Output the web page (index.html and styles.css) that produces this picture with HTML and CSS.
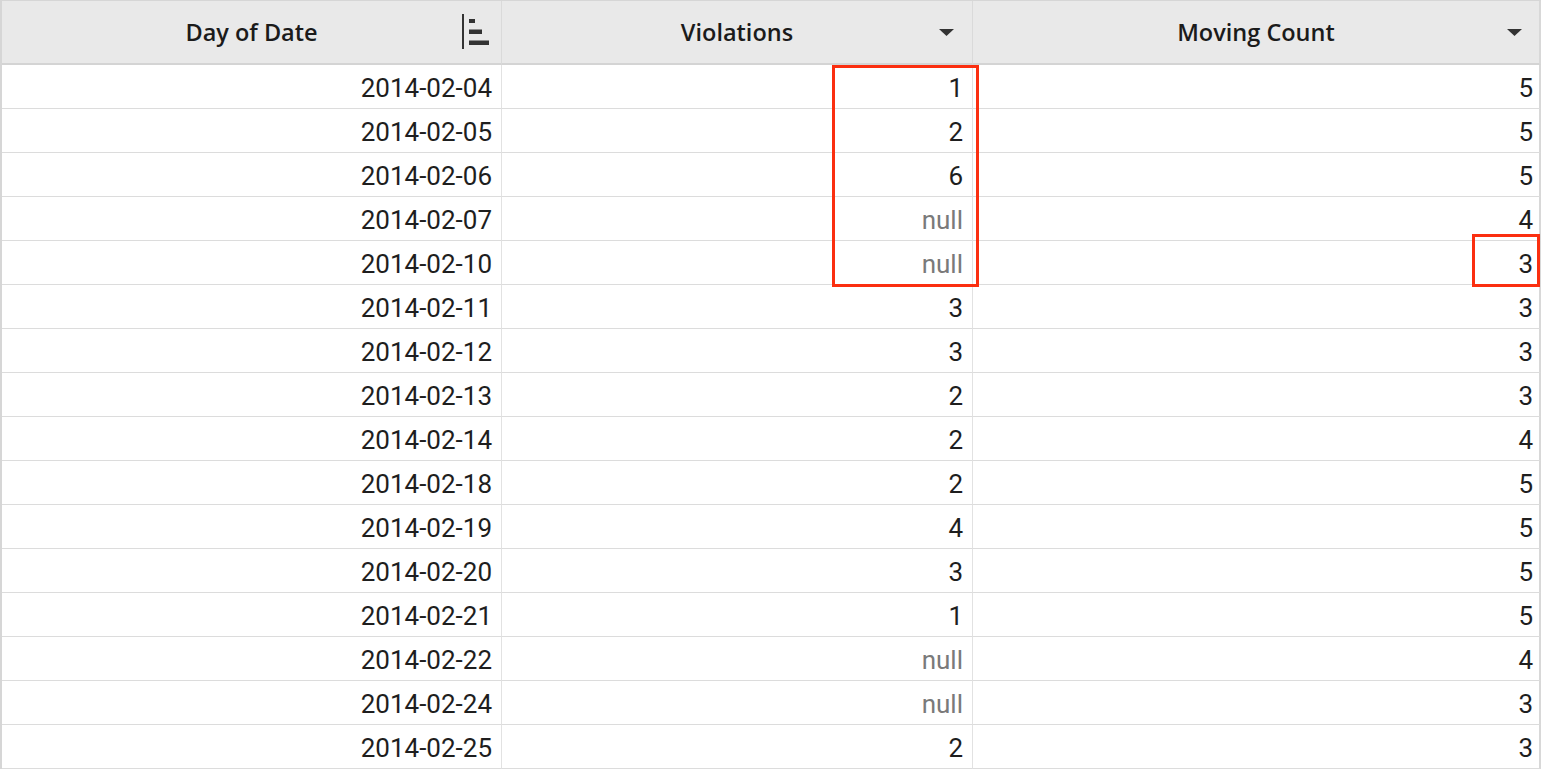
FILE: index.html
```html
<!DOCTYPE html>
<html>
<head>
<meta charset="utf-8">
<link rel="stylesheet" href="styles.css">
</head>
<body>
<div class="table-wrap">
  <div class="grid">
    <div class="hcell">
      <span class="hlabel">Day of Date</span>
      <svg class="sort-icon" width="27" height="36" viewBox="0 0 27 36"><rect x="0" y="0" width="2" height="35" fill="#333"/><rect x="7" y="5" width="6" height="4" fill="#333"/><rect x="7" y="15.5" width="13" height="4.5" fill="#333"/><rect x="7" y="26.5" width="20" height="4.5" fill="#333"/></svg>
    </div>
    <div class="hcell hcell-mid">
      <span class="hlabel">Violations</span>
      <svg class="caret" width="15" height="7" viewBox="0 0 15 7"><polygon points="0,0 15,0 7.5,7" fill="#333"/></svg>
    </div>
    <div class="hcell hcell-last">
      <span class="hlabel">Moving Count</span>
      <svg class="caret" width="15" height="7" viewBox="0 0 15 7"><polygon points="0,0 15,0 7.5,7" fill="#333"/></svg>
    </div>

    <div class="cell">2014-02-04</div><div class="cell">1</div><div class="cell last">5</div>
    <div class="cell">2014-02-05</div><div class="cell">2</div><div class="cell last">5</div>
    <div class="cell">2014-02-06</div><div class="cell">6</div><div class="cell last">5</div>
    <div class="cell">2014-02-07</div><div class="cell null">null</div><div class="cell last">4</div>
    <div class="cell">2014-02-10</div><div class="cell null">null</div><div class="cell last">3</div>
    <div class="cell">2014-02-11</div><div class="cell">3</div><div class="cell last">3</div>
    <div class="cell">2014-02-12</div><div class="cell">3</div><div class="cell last">3</div>
    <div class="cell">2014-02-13</div><div class="cell">2</div><div class="cell last">3</div>
    <div class="cell">2014-02-14</div><div class="cell">2</div><div class="cell last">4</div>
    <div class="cell">2014-02-18</div><div class="cell">2</div><div class="cell last">5</div>
    <div class="cell">2014-02-19</div><div class="cell">4</div><div class="cell last">5</div>
    <div class="cell">2014-02-20</div><div class="cell">3</div><div class="cell last">5</div>
    <div class="cell">2014-02-21</div><div class="cell">1</div><div class="cell last">5</div>
    <div class="cell">2014-02-22</div><div class="cell null">null</div><div class="cell last">4</div>
    <div class="cell">2014-02-24</div><div class="cell null">null</div><div class="cell last">3</div>
    <div class="cell">2014-02-25</div><div class="cell">2</div><div class="cell last">3</div>
  </div>
  <div class="mark mark-violations"></div>
  <div class="mark mark-count"></div>
</div>
</body>
</html>
```

FILE: styles.css
```css
html, body {
  margin: 0;
  padding: 0;
  background: #ffffff;
  overflow: hidden;
}

.table-wrap {
  position: relative;
  width: 1541px;
  border-top: 1px solid #d6d6d6;
  border-left: 2px solid #d6d6d6;
  box-sizing: border-box;
}

.grid {
  display: grid;
  grid-template-columns: 500px 471px 568px;
  grid-template-rows: 64px;
  grid-auto-rows: 44px;
}

.hcell {
  height: 64px;
  box-sizing: border-box;
  background: #e9e9e9;
  border-bottom: 2px solid #d4d4d4;
  border-right: 1px solid #dadada;
  display: grid;
  grid-template-columns: 1fr auto 1fr;
  align-items: center;
  padding: 0 12px;
  font-family: "Open Sans", "Noto Sans", sans-serif;
  font-weight: 600;
  font-size: 23.5px;
  color: #1b1b1b;
}

.hcell-mid {
  padding: 0 18px;
}

.hcell-last {
  padding: 0 17px;
  border-right: 2px solid #d8d8d8;
}

.hlabel {
  grid-column: 2;
  white-space: nowrap;
  padding-bottom: 1px;
}

.sort-icon,
.caret {
  grid-column: 3;
  justify-self: end;
  display: block;
}

.sort-icon {
  margin-top: -1px;
}

.cell {
  height: 44px;
  box-sizing: border-box;
  border-bottom: 1px solid #dcdcdc;
  border-right: 1px solid #e2e2e2;
  padding: 3px 9px 0 0;
  line-height: 40px;
  text-align: right;
  font-family: Roboto, "Liberation Sans", sans-serif;
  font-size: 26px;
  color: #1e1e1e;
}

.cell.last {
  border-right: 2px solid #d8d8d8;
  padding-right: 6px;
}

.cell.null {
  color: #7a7a7a;
}

.mark {
  position: absolute;
  border: 3px solid #fb2f10;
  box-sizing: border-box;
}

.mark-violations {
  left: 830px;
  top: 64px;
  width: 147px;
  height: 222px;
}

.mark-count {
  left: 1470px;
  top: 233px;
  width: 68px;
  height: 53px;
}
```
